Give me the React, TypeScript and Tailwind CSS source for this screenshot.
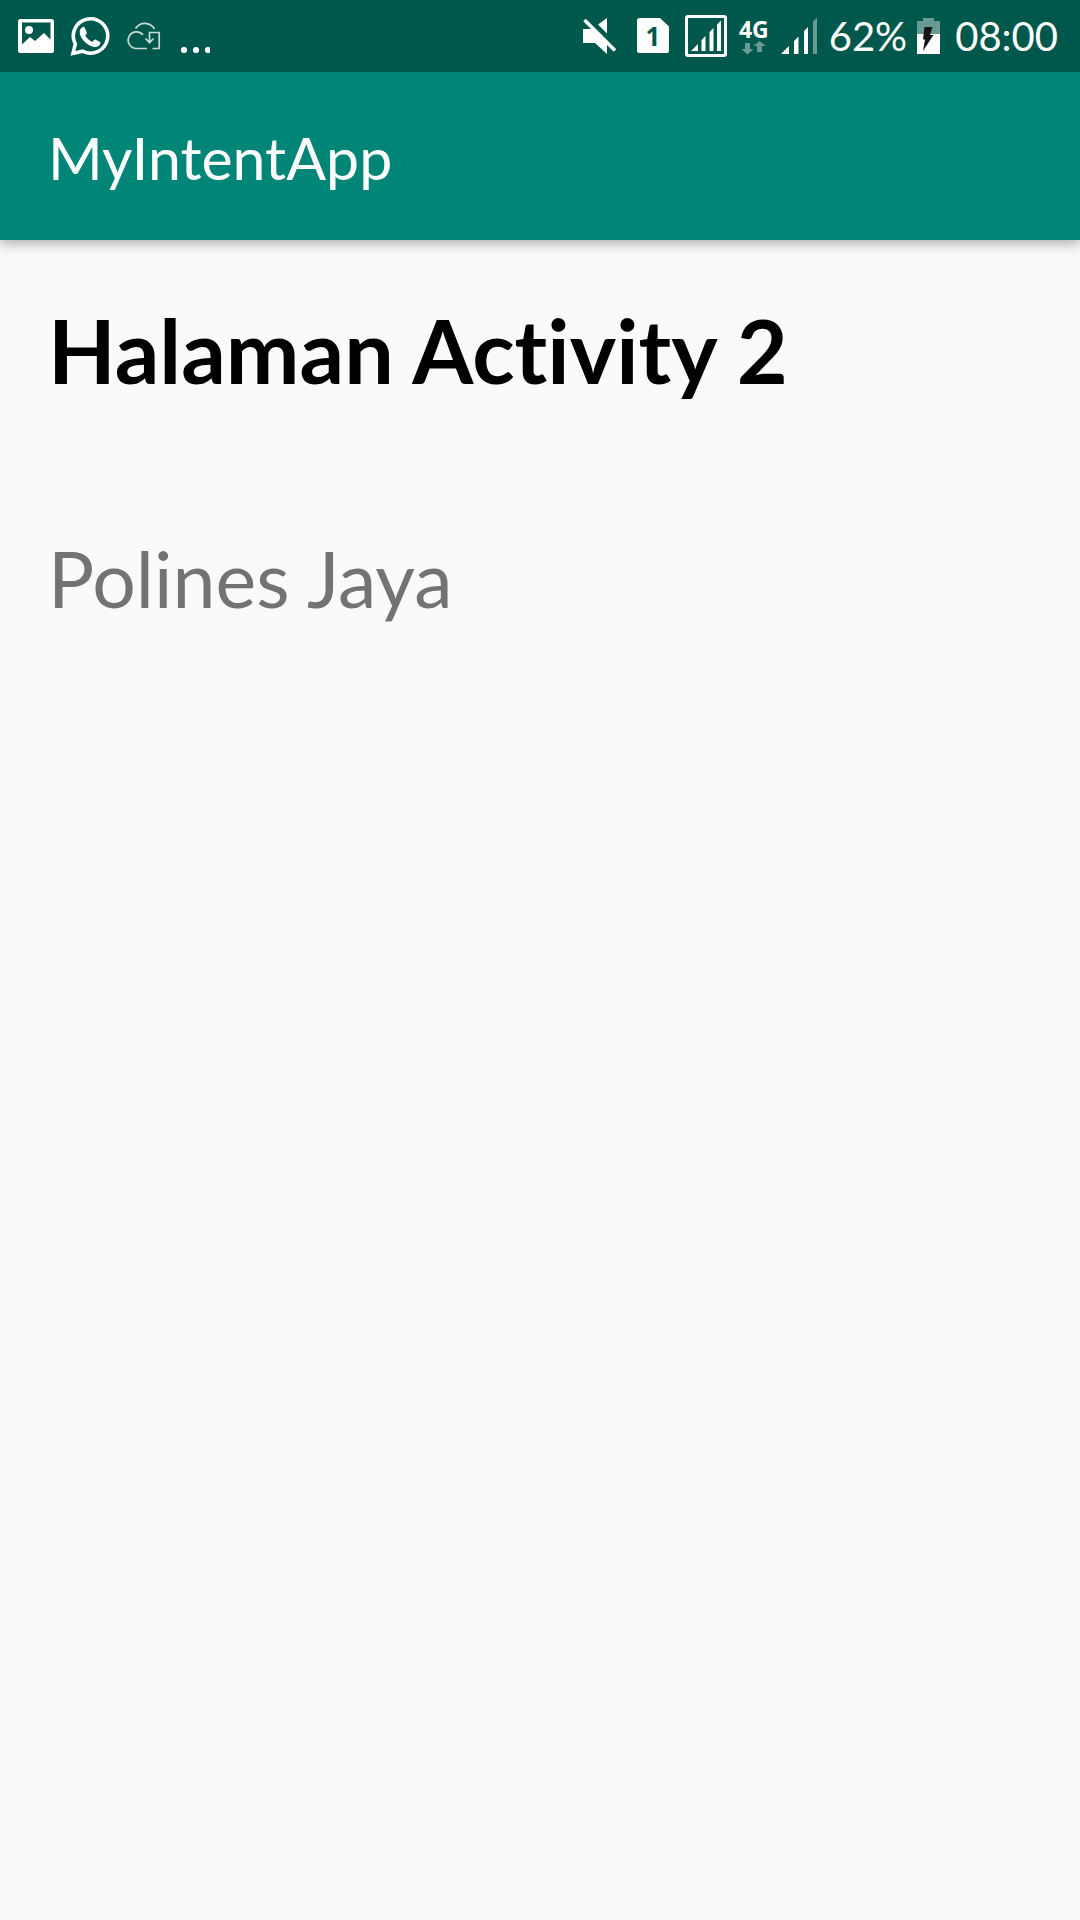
import type { ReactNode } from "react";

function Notifications() {
  return (
    <div className="flex items-center gap-4 text-white">
      <svg className="h-[42px] w-9" viewBox="18 15 36 42" role="img" aria-label="Picture saved">
        <path
          fill="currentColor"
          fillRule="evenodd"
          d="M20.5 19h31a2.5 2.5 0 0 1 2.5 2.5v29a2.5 2.5 0 0 1-2.5 2.5h-31a2.5 2.5 0 0 1-2.5-2.5v-29a2.5 2.5 0 0 1 2.5-2.5zM22 22.5v22l8-7.5 5 4 9-8 6.5 6.5v-17z"
        />
        <circle cx="29" cy="30" r="4" fill="currentColor" />
      </svg>
      <svg className="h-[42px] w-10" viewBox="70 15 40 42" role="img" aria-label="WhatsApp message">
        <path
          fill="none"
          stroke="currentColor"
          strokeWidth="3.6"
          d="M73 53.4l2.3-9.4A17.2 17.2 0 1 1 82.5 51.2z"
        />
        <path
          fill="currentColor"
          d="M82.5 27.3c.9-.7 1.7-.6 2.2.4l2 4.600c.3.8.1 1.300-1.500 3.200 1.800 3.100 4 5 7.200 6.500 1.900-2.600 2.300-2.800 3.300-2.300l4.200 2.200c.8.5.7 1.200.3 2.200-.9 2.200-3.700 3.400-6 2.900C86.800 45.500 79.500 38 79.700 31.700c.1-1.800 1.200-3.500 2.800-4.400z"
        />
      </svg>
      <svg className="h-[42px] w-9" viewBox="126 15 36 42" role="img" aria-label="Cloud download">
        <g fill="none" stroke="#c6dad6" strokeWidth="1.7">
          <path d="M135.5 28.5a11 11 0 0 1 19 .5" />
          <path d="M143 35a8.300 8.300 0 1 0-6.5 13.500H147" />
          <path d="M152.500 48.500h6.700v-16h-9.700V42M145.500 38.500l4 4.200 4-4.200" />
        </g>
      </svg>
      <svg className="h-[42px] w-8" viewBox="178 15 32 42" role="img" aria-label="More notifications">
        <g fill="currentColor">
          <circle cx="184" cy="50" r="3.1" />
          <circle cx="196" cy="50" r="3.1" />
          <circle cx="208" cy="50" r="3.1" />
        </g>
      </svg>
    </div>
  );
}

function StatusText({ children }: { children: ReactNode }) {
  return <span className="text-[40px] leading-none whitespace-nowrap">{children}</span>;
}

function SystemIcons() {
  return (
    <div className="flex items-center text-white">
      <svg className="mr-5 h-[42px] w-[34px]" viewBox="582 15 34 42" role="img" aria-label="Sound muted">
        <path fill="currentColor" d="M582 29h10l14 14v11l-12-11h-12zM606 18v15.500l-9-9z" />
        <path stroke="currentColor" strokeWidth="3.6" d="M583.500 20L614 50.500" />
      </svg>
      <div className="mr-4 grid h-[42px] w-8 place-items-center *:col-start-1 *:row-start-1">
        <svg className="h-[42px] w-8" viewBox="636 15 32 42" aria-hidden="true">
          <path
            fill="currentColor"
            d="M638.500 18H659l9 8.500V50.500a2.500 2.500 0 0 1-2.500 2.500h-27a2.500 2.500 0 0 1-2.500-2.500v-30a2.500 2.500 0 0 1 2.500-2.500z"
          />
        </svg>
        <span className="font-['Noto_Sans',sans-serif] text-[26px] leading-none font-bold text-[#00574b]">1</span>
      </div>
      <svg className="mr-3 h-[42px] w-[42px]" viewBox="684 15 42 42" role="img" aria-label="SIM 1 signal">
        <rect x="685.5" y="16.5" width="39" height="39" rx="1.5" fill="none" stroke="currentColor" strokeWidth="3" />
        <path
          fill="currentColor"
          d="M690 51l7-7v7zM700.500 40l4-4v15h-4zM708.500 32l4-4v23h-4zM716 24.500l4-4V51h-4z"
        />
      </svg>
      <div className="mr-3 flex flex-col items-center">
        <span className="font-['Noto_Sans',sans-serif] text-[23px] leading-6 font-bold">4G</span>
        <svg className="h-3.5 w-6" viewBox="740 41 24 14" aria-hidden="true">
          <path fill="#669a93" d="M743 43h5v6h3.500l-6 5.500-6-5.500h3.500zM755 52h5v-6h4l-6.500-5-6.500 5h4z" />
        </svg>
      </div>
      <svg className="mr-3 h-[42px] w-9" viewBox="780 15 36 42" role="img" aria-label="SIM 2 signal">
        <path fill="currentColor" d="M780 54l8-8v8zM793 41l4.500-4.500V54H793zM803 31l4-4v27h-4z" />
        <path fill="#669a93" d="M812 21.500l4-4V54h-4z" />
      </svg>
      <StatusText>62%</StatusText>
      <svg className="mr-3.5 ml-2.5 h-[42px] w-6" viewBox="916 15 24 42" role="img" aria-label="Battery charging">
        <path fill="#669a93" d="M922 18h11v3h6v13h-23V21h6z" />
        <path fill="currentColor" d="M916 34h23v20h-23z" />
        <path fill="#151515" d="M923.500 27h8l-2.500 8h3.500l-10.500 16 2-11.500H922z" />
      </svg>
      <StatusText>
        <time>08:00</time>
      </StatusText>
    </div>
  );
}

export default function App() {
  return (
    <div className="min-h-screen bg-[#fafafa] font-[Lato,'Noto_Sans',sans-serif] [font-variant-ligatures:none]">
      <div className="relative z-10 flex h-[72px] items-center justify-between bg-[#00574b] pr-[22px] pl-[18px]">
        <Notifications />
        <SystemIcons />
      </div>
      <header className="flex h-[168px] items-center bg-[#008577] px-12 pt-1 text-white shadow-[0_4px_12px_rgba(0,0,0,0.3)]">
        <h1 className="text-[59px] leading-[72px]">MyIntentApp</h1>
      </header>
      <main className="flex flex-col gap-32 px-12 pt-[58px]">
        <h2 className="text-[88px] leading-[104px] font-bold text-black">Halaman Activity 2</h2>
        <p className="text-[77px] leading-[96px] text-[#737373]">Polines Jaya</p>
      </main>
    </div>
  );
}
